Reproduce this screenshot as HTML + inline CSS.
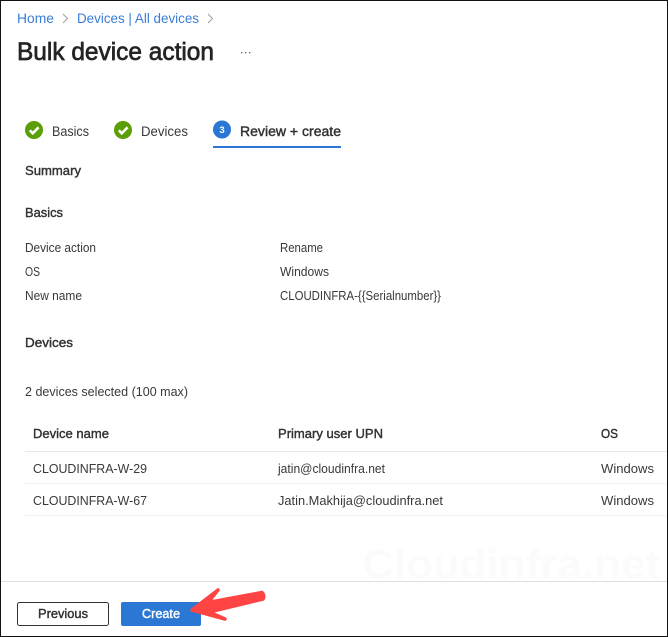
<!DOCTYPE html>
<html><head><meta charset="utf-8"><style>
html,body{margin:0;padding:0;background:#fff}
svg{display:block;position:absolute;left:0;top:0}
text{font-family:"Liberation Sans",sans-serif;font-size:12.5px;fill:#3a3938}
.b{font-size:13px;fill:#323130;stroke:#323130;stroke-width:.4px}
.l{fill:#3a7fd5;font-size:13.5px}
.s{font-size:13.5px}
</style></head><body>
<svg width="668" height="637" viewBox="0 0 668 637" xmlns="http://www.w3.org/2000/svg">
<rect width="668" height="637" fill="#fff"/>
<text x="362" y="578" textLength="298" lengthAdjust="spacingAndGlyphs" style="font-size:41px;font-weight:700;fill:#fbfbfb">Cloudinfra.net</text>
<text class="l" x="17" y="23" textLength="37" lengthAdjust="spacingAndGlyphs">Home</text>
<path d="M63 14l4.500 4.500-4.500 4.500M208 14l4.500 4.500-4.500 4.500" fill="none" stroke="#a19f9d" stroke-width="1"/>
<text class="l" x="77" y="23" textLength="122" lengthAdjust="spacingAndGlyphs">Devices | All devices</text>
<text x="17" y="60" textLength="197" lengthAdjust="spacingAndGlyphs" style="font-size:25px;fill:#252423;stroke:#252423;stroke-width:.7px">Bulk device action</text>
<g fill="#605e5c"><rect x="241" y="52" width="1.300" height="1.300"/><rect x="245" y="52" width="1.300" height="1.300"/><rect x="249" y="52" width="1.300" height="1.300"/></g>
<circle cx="34" cy="130" r="9" fill="#5c9e07"/>
<path d="M29.800 130.300l3 3 5.800-6" fill="none" stroke="#fff" stroke-width="2.600"/>
<text class="s" x="52" y="136" textLength="37" lengthAdjust="spacingAndGlyphs">Basics</text>
<circle cx="123" cy="130" r="9" fill="#5c9e07"/>
<path d="M118.800 130.300l3 3 5.800-6" fill="none" stroke="#fff" stroke-width="2.600"/>
<text class="s" x="141" y="136" textLength="47" lengthAdjust="spacingAndGlyphs">Devices</text>
<circle cx="222" cy="129.500" r="9" fill="#2b78d4"/>
<text x="222" y="133" text-anchor="middle" style="font-size:9.500px;font-weight:700;fill:#fff">3</text>
<text class="b" x="240" y="136" textLength="101" lengthAdjust="spacingAndGlyphs" style="font-size:13.500px">Review + create</text>
<rect x="213" y="146" width="128" height="2" fill="#2b78d4"/>
<text class="b" x="25" y="175" textLength="56" lengthAdjust="spacingAndGlyphs">Summary</text>
<text class="b" x="25" y="217" textLength="38" lengthAdjust="spacingAndGlyphs">Basics</text>
<text x="25" y="252" textLength="71" lengthAdjust="spacingAndGlyphs">Device action</text>
<text x="280" y="252" textLength="43" lengthAdjust="spacingAndGlyphs">Rename</text>
<text x="25" y="276" textLength="15" lengthAdjust="spacingAndGlyphs">OS</text>
<text x="280" y="276" textLength="49" lengthAdjust="spacingAndGlyphs">Windows</text>
<text x="25" y="300" textLength="57" lengthAdjust="spacingAndGlyphs">New name</text>
<text x="280" y="300" textLength="161" lengthAdjust="spacingAndGlyphs">CLOUDINFRA-{{Serialnumber}}</text>
<text class="b" x="25" y="347" textLength="48" lengthAdjust="spacingAndGlyphs">Devices</text>
<text x="25" y="396" textLength="163" lengthAdjust="spacingAndGlyphs">2 devices selected (100 max)</text>
<text class="b" x="33" y="438" textLength="76" lengthAdjust="spacingAndGlyphs">Device name</text>
<text class="b" x="278" y="438" textLength="105" lengthAdjust="spacingAndGlyphs">Primary user UPN</text>
<text class="b" x="601" y="438" textLength="17" lengthAdjust="spacingAndGlyphs">OS</text>
<rect x="25" y="451" width="643" height="1" fill="#e8e8e8"/>
<text x="33" y="473" textLength="114" lengthAdjust="spacingAndGlyphs">CLOUDINFRA-W-29</text>
<text x="278" y="473" textLength="107" lengthAdjust="spacingAndGlyphs">jatin@cloudinfra.net</text>
<text x="601" y="473" textLength="53" lengthAdjust="spacingAndGlyphs" style="font-size:13px">Windows</text>
<rect x="25" y="483" width="643" height="1" fill="#f0f0f0"/>
<text x="33" y="505" textLength="114" lengthAdjust="spacingAndGlyphs">CLOUDINFRA-W-67</text>
<text x="278" y="505" textLength="165" lengthAdjust="spacingAndGlyphs">Jatin.Makhija@cloudinfra.net</text>
<text x="601" y="505" textLength="53" lengthAdjust="spacingAndGlyphs" style="font-size:13px">Windows</text>
<rect x="25" y="515" width="643" height="1" fill="#f0f0f0"/>
<rect x="1" y="581" width="667" height="1" fill="#dedede"/>
<rect x="17.500" y="602.500" width="91" height="23" rx="2" fill="#fff" stroke="#323130"/>
<text class="b" x="38" y="618" textLength="50" lengthAdjust="spacingAndGlyphs" style="font-size:12.500px">Previous</text>
<rect x="121" y="602" width="80" height="24" rx="2" fill="#2b78d4"/>
<text x="142" y="618" textLength="38" lengthAdjust="spacingAndGlyphs" style="font-size:12.500px;fill:#fff;stroke:#fff;stroke-width:.4px">Create</text>
<path d="M192 610L218 590L208 602.500L262 592.500Q265 596 263 599L209 612L225 619Z" fill="#ff4444" stroke="#ff4444" stroke-width="3.500" stroke-linejoin="round"/>
<rect x="0" y="0" width="668" height="1" fill="#111"/>
<rect x="0" y="0" width="1" height="637" fill="#111"/>
<rect x="0" y="636" width="668" height="1" fill="#111"/>
<rect x="667" y="0" width="1" height="637" fill="#111"/>
</svg>
</body></html>
